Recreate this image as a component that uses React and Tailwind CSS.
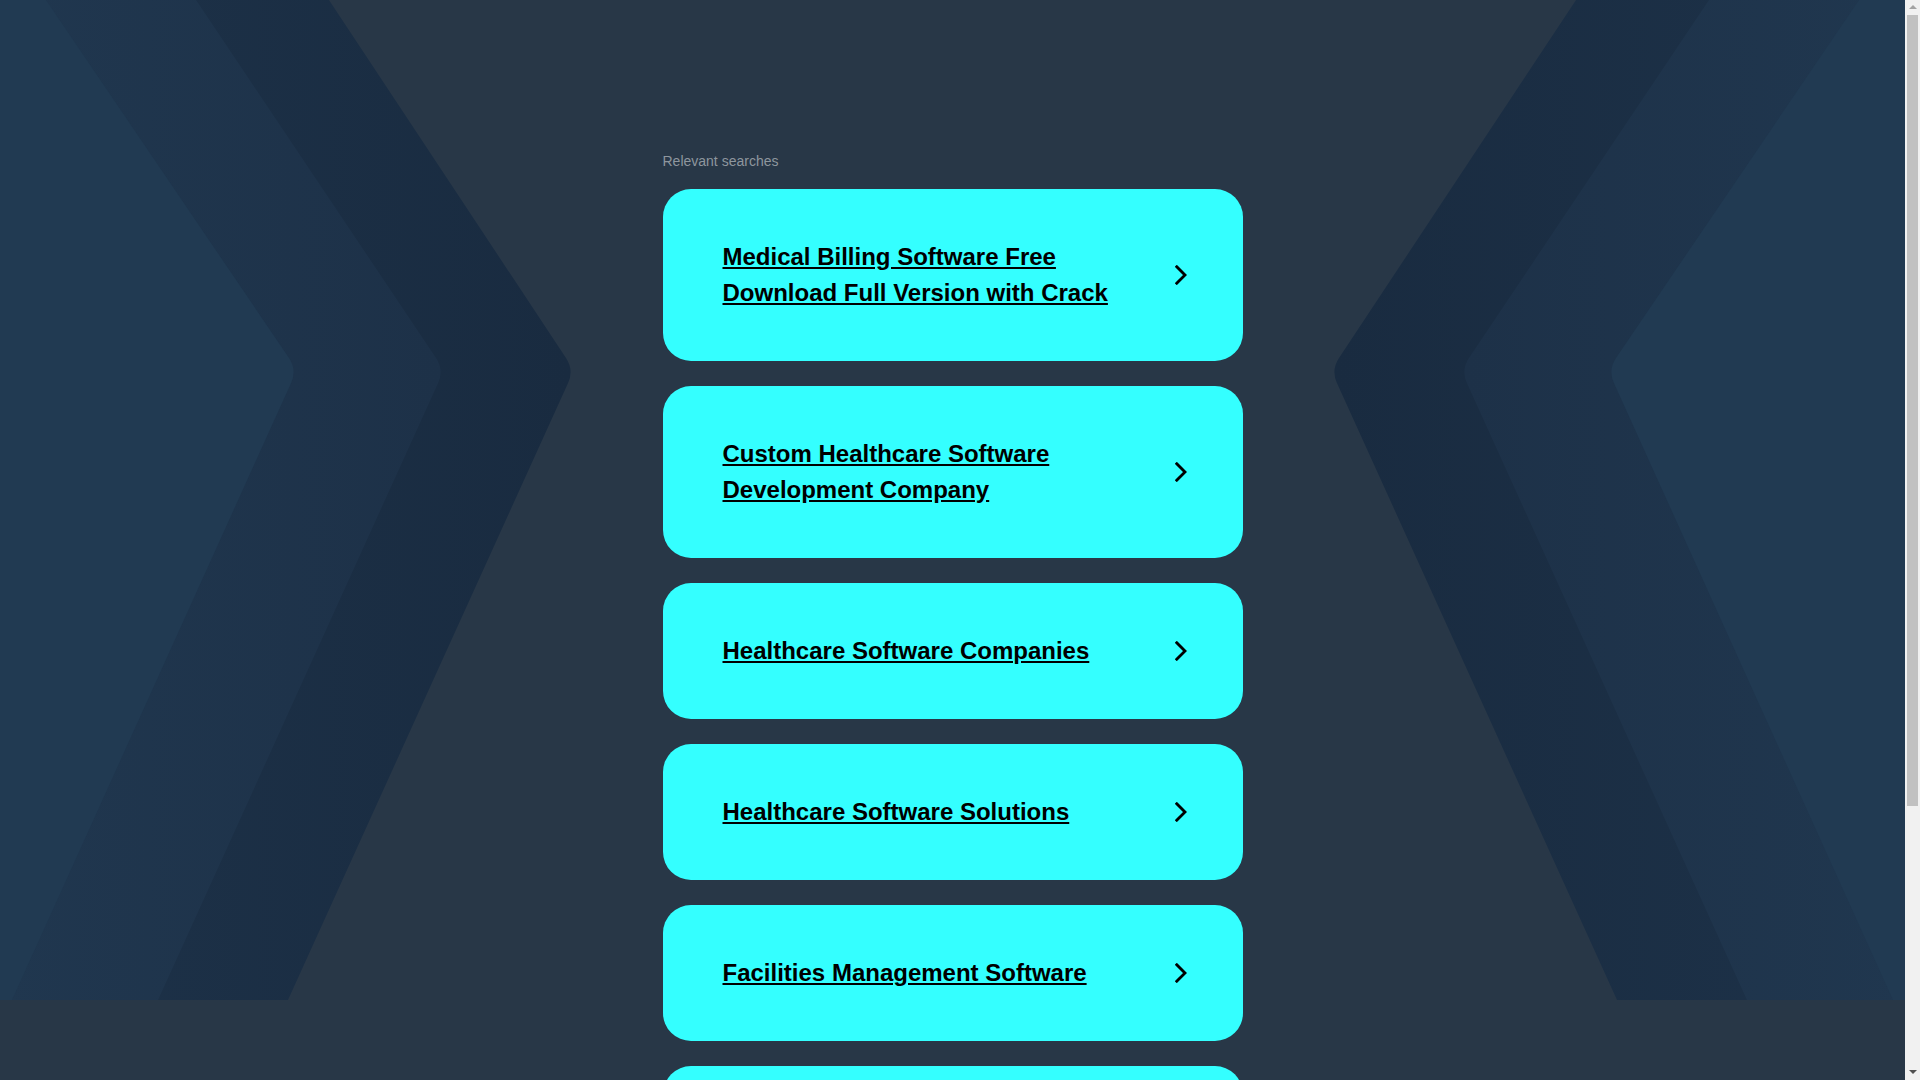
import React from "react";

const items = [
  "Medical Billing Software Free Download Full Version with Crack",
  "Custom Healthcare Software Development Company",
  "Healthcare Software Companies",
  "Healthcare Software Solutions",
  "Facilities Management Software",
  "Healthcare Management Software",
];

function Chevron() {
  return (
    <svg width="12" height="20" viewBox="0 0 12 20" className="shrink-0">
      <path d="M1.8 1.8 L10 10 L1.8 18.2" fill="none" stroke="#000" strokeWidth="2.8" strokeLinecap="square" strokeLinejoin="miter" />
    </svg>
  );
}

function tipPath(top, tipX, bottom) {
  const a1x = tipX - 0.665 * 12;
  const a1y = 370 - 12;
  const a2x = tipX - 0.454 * 13;
  const a2y = 383;
  return `M0 0 L${top} 0 L${a1x} ${a1y} Q${tipX} 370 ${a2x} ${a2y} L${bottom} 1000 L0 1000 Z`;
}

function Pattern({ flip }) {
  const d = flip ? "gd2" : "gd1";
  const m = flip ? "gm2" : "gm1";
  return (
    <svg
      width="620"
      height="1000"
      viewBox="0 0 620 1000"
      className={flip ? "absolute right-0 top-0 -scale-x-100" : "absolute left-0 top-0"}
    >
      <defs>
        <linearGradient id={d} x1="0" y1="0" x2="1" y2="0">
          <stop offset="0" stopColor="#1d3249" />
          <stop offset="1" stopColor="#192b40" />
        </linearGradient>
        <linearGradient id={m} x1="0" y1="0" x2="1" y2="0">
          <stop offset="0" stopColor="#20374f" />
          <stop offset="1" stopColor="#1d3148" />
        </linearGradient>
      </defs>
      <path d={tipPath(329, 574, 288)} fill={`url(#${d})`} />
      <path d={tipPath(196, 444, 158)} fill={`url(#${m})`} />
      <path d={tipPath(46, 297, 12)} fill="#213a52" />
    </svg>
  );
}

function Scrollbar() {
  return (
    <div className="fixed right-0 top-0 flex h-screen w-[15px] flex-col bg-[#f1f1f1]">
      <div className="flex h-[15px] items-center justify-center">
        <svg width="8" height="5" viewBox="0 0 8 5">
          <path d="M0 4 L4 0 L8 4 Z" fill="#a3a3a3" />
        </svg>
      </div>
      <div className="flex-1 px-[2px]">
        <div className="h-[791px] w-full bg-[#c1c1c1]" />
      </div>
      <div className="flex h-[15px] items-center justify-center">
        <svg width="8" height="5" viewBox="0 0 8 5">
          <path d="M0 0 L8 0 L4 4 Z" fill="#505050" />
        </svg>
      </div>
    </div>
  );
}

export default function App() {
  return (
    <div className="relative min-h-screen bg-[#283747] font-['Liberation_Sans',Arial,sans-serif]">
      <div className="relative mr-[15px]">
        <div className="pointer-events-none absolute inset-x-0 top-0 h-[1000px] overflow-hidden">
          <Pattern />
          <Pattern flip />
        </div>
        <div className="relative mx-auto w-[580px] pt-[153px] pb-[232px]">
          <p className="mb-[20px] text-[14px] leading-4 text-[#8e969e]">Relevant searches</p>
          <div className="flex flex-col gap-[25px]">
            {items.map((t) => (
              <a
                key={t}
                href="#"
                className="flex items-center justify-between rounded-[28px] bg-[#34ffff] py-[50px] pl-[60px] pr-[56px]"
              >
                <span className="max-w-[420px] text-[24px] font-bold leading-9 text-black underline">{t}</span>
                <Chevron />
              </a>
            ))}
          </div>
        </div>
      </div>
      <Scrollbar />
    </div>
  );
}
